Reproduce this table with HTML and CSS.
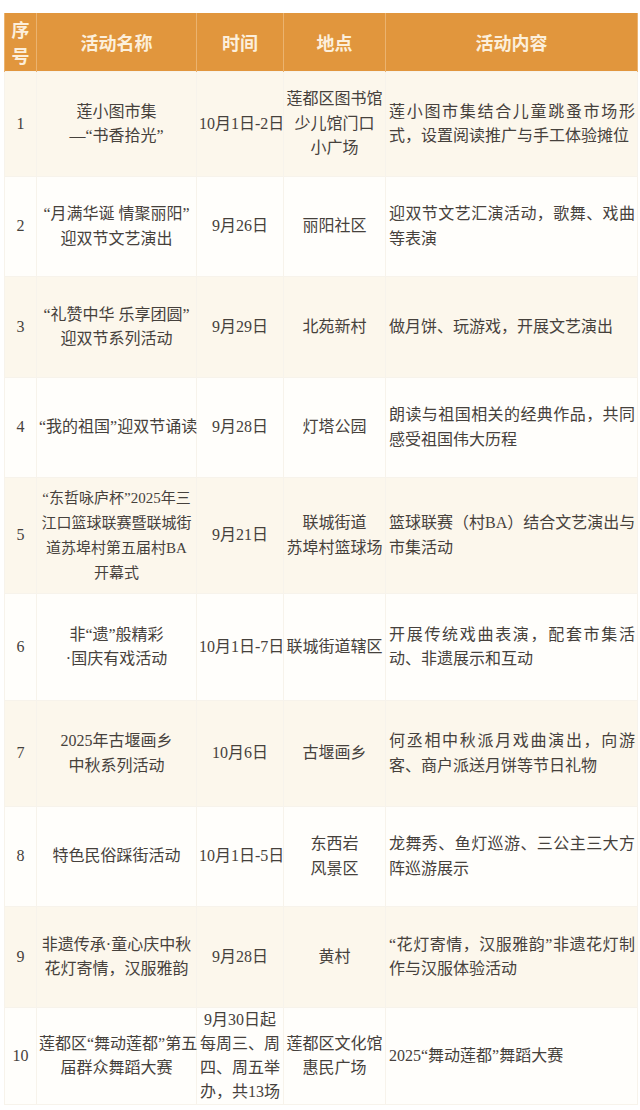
FILE: index.html
```html
<!DOCTYPE html>
<html lang="zh-CN">
<head>
<meta charset="utf-8">
<title>活动安排</title>
<link rel="stylesheet" href="styles.css">
</head>
<body>
<table class="events">
  <colgroup>
    <col class="c-no"><col class="c-name"><col class="c-time"><col class="c-place"><col class="c-desc">
  </colgroup>
  <thead>
    <tr>
      <th class="th-no">序<br>号</th>
      <th>活动名称</th>
      <th>时间</th>
      <th>地点</th>
      <th>活动内容</th>
    </tr>
  </thead>
  <tbody>
    <tr>
      <td>1</td>
      <td>莲小图市集<br>—“书香拾光”</td>
      <td>10月1日-2日</td>
      <td>莲都区图书馆<br>少儿馆门口<br>小广场</td>
      <td class="desc"><span class="ln j">莲小图市集结合儿童跳蚤市场形</span><span class="ln">式，设置阅读推广与手工体验摊位</span></td>
    </tr>
    <tr>
      <td>2</td>
      <td>“月满华诞 情聚丽阳”<br>迎双节文艺演出</td>
      <td>9月26日</td>
      <td>丽阳社区</td>
      <td class="desc"><span class="ln j">迎双节文艺汇演活动，歌舞、戏曲</span><span class="ln">等表演</span></td>
    </tr>
    <tr>
      <td>3</td>
      <td>“礼赞中华 乐享团圆”<br>迎双节系列活动</td>
      <td>9月29日</td>
      <td>北苑新村</td>
      <td class="desc"><span class="ln">做月饼、玩游戏，开展文艺演出</span></td>
    </tr>
    <tr>
      <td>4</td>
      <td>“我的祖国”迎双节诵读</td>
      <td>9月28日</td>
      <td>灯塔公园</td>
      <td class="desc"><span class="ln j">朗读与祖国相关的经典作品，共同</span><span class="ln">感受祖国伟大历程</span></td>
    </tr>
    <tr>
      <td>5</td>
      <td class="tight">“东哲咏庐杯”2025年三<br>江口篮球联赛暨联城街<br>道苏埠村第五届村BA<br>开幕式</td>
      <td>9月21日</td>
      <td>联城街道<br>苏埠村篮球场</td>
      <td class="desc"><span class="ln j">篮球联赛（村BA）结合文艺演出与</span><span class="ln">市集活动</span></td>
    </tr>
    <tr>
      <td>6</td>
      <td>非“遗”般精彩<br>·国庆有戏活动</td>
      <td>10月1日-7日</td>
      <td>联城街道辖区</td>
      <td class="desc"><span class="ln j">开展传统戏曲表演，配套市集活</span><span class="ln">动、非遗展示和互动</span></td>
    </tr>
    <tr>
      <td>7</td>
      <td>2025年古堰画乡<br>中秋系列活动</td>
      <td>10月6日</td>
      <td>古堰画乡</td>
      <td class="desc"><span class="ln j">何丞相中秋派月戏曲演出，向游</span><span class="ln">客、商户派送月饼等节日礼物</span></td>
    </tr>
    <tr>
      <td>8</td>
      <td>特色民俗踩街活动</td>
      <td>10月1日-5日</td>
      <td>东西岩<br>风景区</td>
      <td class="desc"><span class="ln j">龙舞秀、鱼灯巡游、三公主三大方</span><span class="ln">阵巡游展示</span></td>
    </tr>
    <tr>
      <td>9</td>
      <td>非遗传承·童心庆中秋<br>花灯寄情，汉服雅韵</td>
      <td>9月28日</td>
      <td>黄村</td>
      <td class="desc"><span class="ln j">“花灯寄情，汉服雅韵”非遗花灯制</span><span class="ln">作与汉服体验活动</span></td>
    </tr>
    <tr>
      <td>10</td>
      <td>莲都区“舞动莲都”第五<br>届群众舞蹈大赛</td>
      <td class="dense">9月30日起<br>每周三、周<br>四、周五举<br>办，共13场</td>
      <td>莲都区文化馆<br>惠民广场</td>
      <td class="desc"><span class="ln">2025“舞动莲都”舞蹈大赛</span></td>
    </tr>
  </tbody>
</table>
</body>
</html>
```

FILE: styles.css
```css
html, body {
  margin: 0;
  padding: 0;
  background: #ffffff;
}

body {
  padding: 13px 0 0 4px;
  font-family: "Liberation Serif", "Noto Sans CJK SC", serif;
  color: #46413c;
}

.events {
  width: 633px;
  table-layout: fixed;
  border-collapse: collapse;
  font-size: 16px;
  line-height: 24.5px;
}

.c-no { width: 32px; }
.c-name { width: 160px; }
.c-time { width: 87px; }
.c-place { width: 102px; }
.c-desc { width: 252px; }

.events th {
  height: 58px;
  padding: 0;
  background: #e1963d;
  color: #fcefdb;
  font-family: "Noto Sans CJK SC", sans-serif;
  font-weight: 700;
  font-size: 18px;
  line-height: 24px;
  text-align: center;
  vertical-align: middle;
  border-left: 1px solid #ebb36f;
  border-right: 1px solid #ebb36f;
}

.events th.th-no {
  line-height: 26px;
}

.events td {
  padding: 0 2px;
  text-align: center;
  vertical-align: middle;
  white-space: nowrap;
  border: 1px solid #f7f3eb;
}

.events tbody tr:nth-child(odd) td { background: #fcf7ec; }
.events tbody tr:nth-child(even) td { background: #fffefb; }

.events tbody tr:nth-child(1) { height: 105px; }
.events tbody tr:nth-child(2) { height: 100px; }
.events tbody tr:nth-child(3) { height: 101px; }
.events tbody tr:nth-child(4) { height: 100px; }
.events tbody tr:nth-child(5) { height: 116px; }
.events tbody tr:nth-child(6) { height: 107px; }
.events tbody tr:nth-child(7) { height: 106px; }
.events tbody tr:nth-child(8) { height: 100px; }
.events tbody tr:nth-child(9) { height: 101px; }
.events tbody tr:nth-child(10) { height: 96px; }

.events td.tight {
  font-size: 15px;
  line-height: 25px;
}

.events td.dense {
  line-height: 24px;
}

.events td.desc {
  text-align: left;
  padding: 0 2px 0 3px;
}

.ln {
  display: block;
}

.ln.j {
  text-align: justify;
  text-align-last: justify;
}
```
